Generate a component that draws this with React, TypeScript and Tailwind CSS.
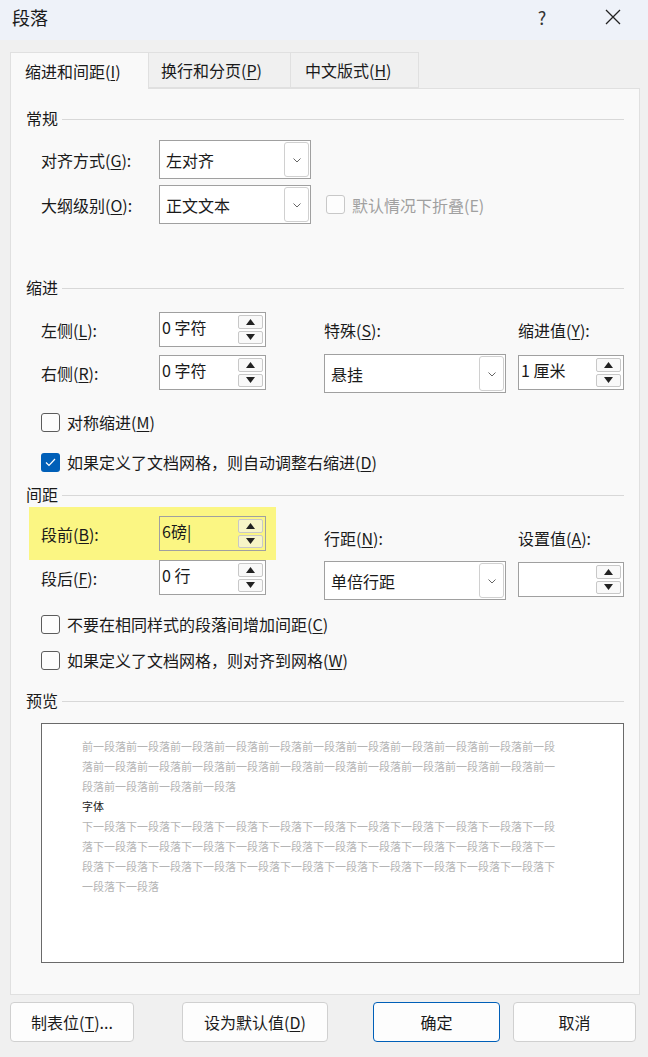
import React from "react";

const U = ({ c }: { c: string }) => <span className="underline underline-offset-2">{c}</span>;

const Chevron = () => (
  <svg width="12" height="12" viewBox="0 0 12 12" fill="none" stroke="#666" strokeWidth="1">
    <path d="M2.5 4.5 L6 8 L9.5 4.5" />
  </svg>
);

const Combo = ({ value, w }: { value: string; w: string }) => (
  <div className={`${w} h-[39px] flex items-center bg-white border border-[#a0a0a0]`}>
    <span className="flex-1 pl-[6px]">{value}</span>
    <div className="w-[25px] h-[35px] mr-[1px] border border-[#d0d0d0] rounded-[3px] flex items-center justify-center">
      <Chevron />
    </div>
  </div>
);

const Spin = ({ value, w = "w-[107px]", bg = "bg-white" }: { value: string; w?: string; bg?: string }) => (
  <div className={`${w} h-[35px] flex ${bg} border border-[#a0a0a0]`}>
    <span className="flex-1 pl-[2px] leading-[28px]">{value}</span>
    <div className="w-[25px] my-[2px] mr-[2px] flex flex-col gap-[2px]">
      <div className="flex-1 border border-[#c8c8c8] rounded-[2px] flex items-center justify-center bg-[#f5f5f5]/60">
        <svg width="9" height="6" viewBox="0 0 9 6"><path d="M0 6 L4.5 0 L9 6Z" fill="#222" /></svg>
      </div>
      <div className="flex-1 border border-[#c8c8c8] rounded-[2px] flex items-center justify-center bg-[#f5f5f5]/60">
        <svg width="9" height="6" viewBox="0 0 9 6"><path d="M0 0 L4.5 6 L9 0Z" fill="#222" /></svg>
      </div>
    </div>
  </div>
);

const Check = ({ checked, disabled, label }: { checked?: boolean; disabled?: boolean; label: React.ReactNode }) => (
  <div className={`flex items-center gap-[7px] ${disabled ? "text-[#a0a0a0]" : ""}`}>
    {checked ? (
      <div className="w-[19px] h-[19px] rounded-[3px] bg-[#005fb8] flex items-center justify-center">
        <svg width="11" height="9" viewBox="0 0 11 9" fill="none" stroke="white" strokeWidth="1.2">
          <path d="M1 4.5 L4 7.5 L10 1" />
        </svg>
      </div>
    ) : (
      <div className={`w-[19px] h-[19px] rounded-[3px] border ${disabled ? "border-[#c8c8c8]" : "border-[#5c5c5c]"} bg-white/60`} />
    )}
    <span>{label}</span>
  </div>
);

const Section = ({ title }: { title: string }) => (
  <div className="flex items-center gap-[4px] pl-[15px] pr-[15px]">
    <span>{title}</span>
    <div className="flex-1 h-px bg-[#d8d8d8] mt-[2px]" />
  </div>
);

const Btn = ({ children, w, primary }: { children: React.ReactNode; w: string; primary?: boolean }) => (
  <div className={`${w} h-[40px] flex items-center justify-center rounded-[4px] bg-[#fdfdfd] border ${primary ? "border-[#005fb8]" : "border-[#d0d0d0]"}`}>
    {children}
  </div>
);

const before = [
  "前一段落前一段落前一段落前一段落前一段落前一段落前一段落前一段落前一段落前一段落前一段",
  "落前一段落前一段落前一段落前一段落前一段落前一段落前一段落前一段落前一段落前一段落前一",
  "段落前一段落前一段落前一段落",
];
const after = [
  "下一段落下一段落下一段落下一段落下一段落下一段落下一段落下一段落下一段落下一段落下一段",
  "落下一段落下一段落下一段落下一段落下一段落下一段落下一段落下一段落下一段落下一段落下一",
  "段落下一段落下一段落下一段落下一段落下一段落下一段落下一段落下一段落下一段落下一段落下",
  "一段落下一段落",
];

export default function App() {
  return (
    <div
      className="w-[648px] h-[1057px] bg-[#f0f0f0] text-[16px] leading-[22px] text-[#1a1a1a] overflow-hidden flex flex-col"
      style={{ fontFamily: '"Noto Sans CJK SC", "Noto Sans", sans-serif' }}
    >
      {/* title bar */}
      <div className="h-[40px] bg-[#eef2f9] flex items-center pl-[12px] shrink-0">
        <span className="text-[18px] flex-1 -mt-[6px]">段落</span>
        <span className="text-[18px] w-[20px] text-center mr-[52px] text-[#333] -mt-[6px]">?</span>
        <svg width="18" height="18" viewBox="0 0 18 18" stroke="#222" strokeWidth="1.3" className="mr-[26px] -mt-[6px]">
          <path d="M2 2 L16 16 M16 2 L2 16" />
        </svg>
      </div>

      {/* tabs */}
      <div className="flex pl-[10px] mt-[11px] h-[37px] items-end">
        <div className="w-[139px] h-[37px] bg-[#f9f9f9] border border-b-0 border-[#e0e0e0] pl-[14px] leading-[37px] relative z-10 -mb-px">
          缩进和间距(<U c="I" />)
        </div>
        <div className="w-[142px] h-[36px] border border-l-0 border-[#e0e0e0] leading-[34px] pl-[12px]">
          换行和分页(<U c="P" />)
        </div>
        <div className="w-[128px] h-[36px] border border-l-0 border-[#e0e0e0] leading-[34px] pl-[14px]">
          中文版式(<U c="H" />)
        </div>
      </div>

      {/* panel */}
      <div className="mx-[10px] w-[630px] h-[907px] bg-[#f9f9f9] border border-[#e0e0e0] flex flex-col pt-[18px]">
        <Section title="常规" />
        <div className="flex flex-col gap-[6px] mt-[11px] pl-[30px]">
          <div className="flex items-center">
            <span className="w-[118px]">对齐方式(<U c="G" />):</span>
            <Combo value="左对齐" w="w-[152px]" />
          </div>
          <div className="flex items-center">
            <span className="w-[118px]">大纲级别(<U c="O" />):</span>
            <Combo value="正文文本" w="w-[152px]" />
            <div className="ml-[15px]">
              <Check disabled label="默认情况下折叠(E)" />
            </div>
          </div>
        </div>

        <div className="mt-[52px]"><Section title="缩进" /></div>
        <div className="mt-[14px] pl-[30px] flex">
          <div className="flex flex-col gap-[8px]">
            <div className="flex items-center">
              <span className="w-[118px]">左侧(<U c="L" />):</span>
              <Spin value="0 字符" />
            </div>
            <div className="flex items-center">
              <span className="w-[118px]">右侧(<U c="R" />):</span>
              <Spin value="0 字符" />
            </div>
          </div>
          <div className="ml-[58px] flex flex-col">
            <span className="leading-[36px]">特殊(<U c="S" />):</span>
            <div className="mt-[6px]"><Combo value="悬挂" w="w-[182px]" /></div>
          </div>
          <div className="ml-[12px] flex flex-col">
            <span className="leading-[36px]">缩进值(<U c="Y" />):</span>
            <div className="mt-[7px]"><Spin value="1 厘米" w="w-[106px]" /></div>
          </div>
        </div>
        <div className="mt-[18px] pl-[30px] flex flex-col gap-[18px]">
          <Check label={<>对称缩进(<U c="M" />)</>} />
          <Check checked label={<>如果定义了文档网格，则自动调整右缩进(<U c="D" />)</>} />
        </div>

        <div className="mt-[10px]"><Section title="间距" /></div>
        <div className="mt-[2px] pl-[18px] flex">
          <div className="flex flex-col">
            <div className="w-[247px] h-[53px] bg-[#fbf683] flex items-center pl-[12px]">
              <span className="w-[118px]">段前(<U c="B" />):</span>
              <Spin value="6磅|" bg="bg-[#fbf683]" />
            </div>
            <div className="flex items-center pl-[12px]">
              <span className="w-[118px]">段后(<U c="F" />):</span>
              <Spin value="0 行" />
            </div>
          </div>
          <div className="ml-[48px] flex flex-col">
            <span className="leading-[36px] mt-[13px]">行距(<U c="N" />):</span>
            <div className="mt-[5px]"><Combo value="单倍行距" w="w-[182px]" /></div>
          </div>
          <div className="ml-[12px] flex flex-col">
            <span className="leading-[36px] mt-[13px]">设置值(<U c="A" />):</span>
            <div className="mt-[6px]"><Spin value="" w="w-[106px]" /></div>
          </div>
        </div>
        <div className="mt-[13px] pl-[30px] flex flex-col gap-[14px]">
          <Check label={<>不要在相同样式的段落间增加间距(<U c="C" />)</>} />
          <Check label={<>如果定义了文档网格，则对齐到网格(<U c="W" />)</>} />
        </div>

        <div className="mt-[18px]"><Section title="预览" /></div>
        <div className="ml-[30px] mt-[12px] w-[583px] h-[240px] bg-white border border-[#6a6a6a] pl-[40px] pt-[12px] text-[11px] leading-[20px] text-[#b4b4b4]">
          {before.map((l, i) => <div key={i}>{l}</div>)}
          <div className="text-[#222]">字体</div>
          {after.map((l, i) => <div key={i}>{l}</div>)}
        </div>
      </div>

      {/* buttons */}
      <div className="flex mt-[7px] pl-[10px]">
        <Btn w="w-[124px]">制表位(<U c="T" />)...</Btn>
        <div className="ml-[48px]"><Btn w="w-[146px]">设为默认值(<U c="D" />)</Btn></div>
        <div className="ml-[45px]"><Btn w="w-[127px]" primary>确定</Btn></div>
        <div className="ml-[13px]"><Btn w="w-[123px]">取消</Btn></div>
      </div>
    </div>
  );
}
